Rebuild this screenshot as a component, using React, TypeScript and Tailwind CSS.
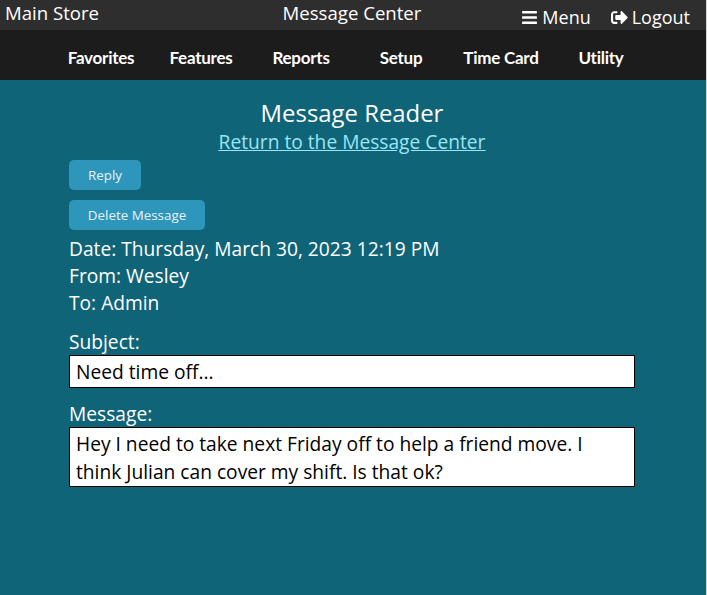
import React from 'react';
import { FaBars, FaSignOutAlt } from 'react-icons/fa';

const navItems = ['Favorites', 'Features', 'Reports', 'Setup', 'Time Card', 'Utility'];

const App: React.FC = () => {
  return (
    <div className="h-[595px] w-[707px] overflow-hidden border-r border-[#d4d4d4] bg-[#0f6478] font-['Open_Sans',sans-serif] text-white">
      <div className="flex h-[30px] items-start justify-between bg-[#2e2e2e] text-[18.6px]">
        <div className="w-[198px] pl-[5px] leading-[26px]">Main Store</div>
        <div className="leading-[26px]">Message Center</div>
        <div className="flex w-[200px] items-center justify-end gap-[20px] pr-[16px] pt-[4px] text-[18px] leading-[27px]">
          <span className="flex items-center gap-[4px]">
            <FaBars size={17} /> Menu
          </span>
          <span className="flex items-center gap-[4px]">
            <FaSignOutAlt size={17} /> Logout
          </span>
        </div>
      </div>

      <div className="flex h-[50px] items-center bg-[#1c1c1c] pl-[51px] pt-[6px] font-['Lato',sans-serif] text-[17px] font-bold tracking-[-0.25px]">
        {navItems.map((item) => (
          <div key={item} className="w-[100px] text-center">
            {item}
          </div>
        ))}
      </div>

      <div className="pl-[69px] pr-[71px]">
        <div className="pt-[18px] text-center text-[23.9px] leading-[30px]">Message Reader</div>
        <div className="text-center text-[19.2px] leading-[28px] text-[#9be4f5] underline">
          <a href="#">Return to the Message Center</a>
        </div>

        <button className="mt-[4px] block h-[30px] w-[72px] rounded-[5px] bg-[#2e95bb] pt-[1px] text-[13.4px] text-[#e8f3f7]">
          Reply
        </button>
        <button className="mt-[10px] block h-[30px] w-[136px] rounded-[5px] bg-[#2e95bb] text-[13.4px] text-[#e8f3f7]">
          Delete Message
        </button>

        <div className="mt-[5px] text-[19.2px] leading-[27px]">
          <div>Date: Thursday, March 30, 2023 12:19 PM</div>
          <div>From: Wesley</div>
          <div>To: Admin</div>
        </div>

        <div className="mt-[13px] text-[19.2px] leading-[26px]">Subject:</div>
        <div className="h-[33px] w-[566px] border border-black bg-white px-[6px] text-[19.2px] leading-[31px] text-black">
          Need time off...
        </div>

        <div className="mt-[13px] text-[19.2px] leading-[26px]">Message:</div>
        <div className="h-[60px] w-[566px] border border-black bg-white px-[6px] pt-[2px] text-[19.2px] leading-[28px] text-black">
          Hey I need to take next Friday off to help a friend move. I think Julian can cover my shift. Is that ok?
        </div>
      </div>
    </div>
  );
};

export default App;
